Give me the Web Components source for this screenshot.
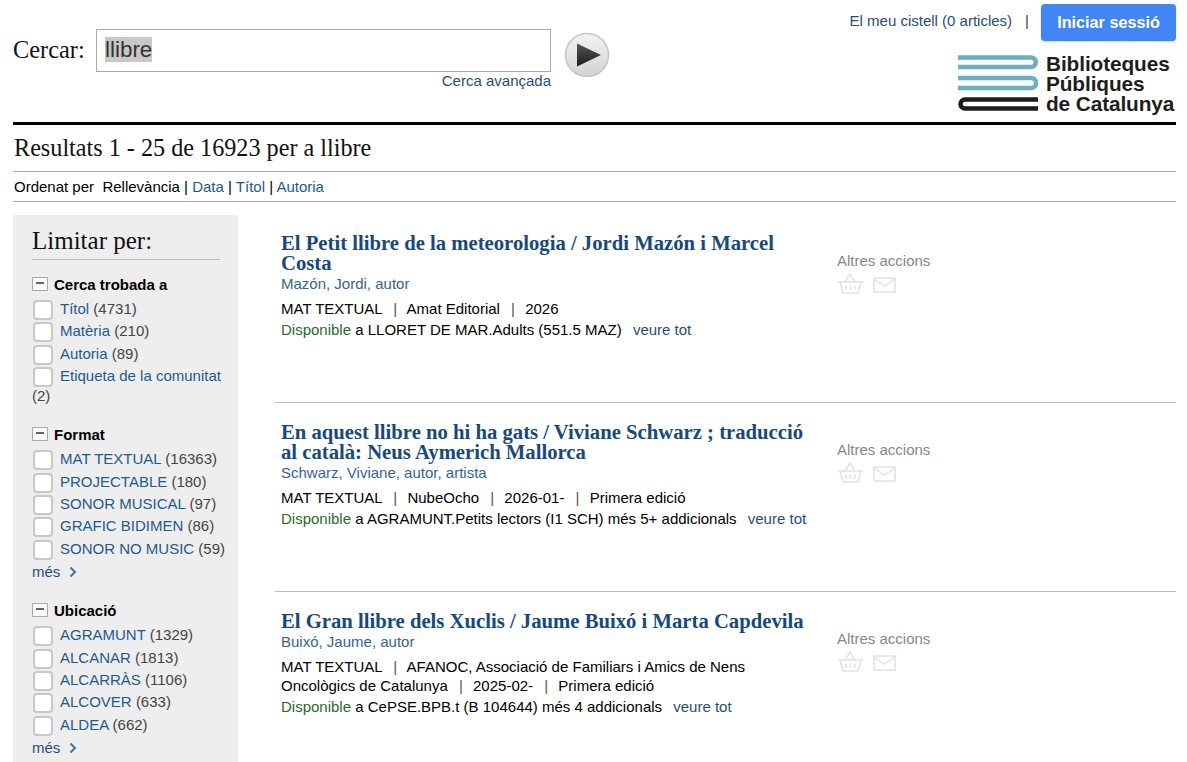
<!DOCTYPE html>
<html lang="ca"><head><meta charset="utf-8"><title>Cercar</title>
<style>
html,body{margin:0;height:762px;overflow:hidden;background:#fff}
body{font:15px/1.2 "Liberation Sans",Arial,sans-serif;color:#000}
</style></head><body>
<bpc-page></bpc-page>
<template id="hdr"><style>
:host{display:flex;justify-content:space-between;height:122px;border-bottom:3px solid #000}
.l{display:flex;align-items:flex-start;padding-top:29px}
.lab{font:24.4px/42px "Liberation Serif",serif;width:83px;color:#111}
.col{display:flex;flex-direction:column;align-items:flex-end}
.box{box-sizing:border-box;width:455px;height:43px;border:1px solid #aaa;padding:7px 8px;font:22.4px/25px "Liberation Sans",sans-serif;color:#333}
.box span{background:#c8c8c8}
a{color:#1f4e79;text-decoration:none}
.adv{line-height:17px}
.go{margin:3px 0 0 13px;display:block}
.r{display:flex;flex-direction:column;align-items:flex-end}
.top{display:flex;align-items:center;padding-top:4px;height:37px}
.top a,.sep{position:relative;top:-2px}
.sep{margin:0 12px 0 13px;color:#444}
.btn{box-sizing:border-box;width:135px;height:37px;background:#4285f4;color:#fff;border-radius:4px;font:700 16.2px/37px "Liberation Sans",sans-serif;text-align:center;box-shadow:0 1px 2px #0003}
.logo{display:flex;margin-top:13px;gap:8px;align-items:flex-start}
.logo svg{display:block}
.name{font:700 20.8px/20px "Liberation Sans",sans-serif;color:#1d1d1b;width:130px;letter-spacing:-.1px;white-space:nowrap}
</style>
<div class="l"><div class="lab">Cercar:</div><div class="col"><div class="box"><span>llibre</span></div><a class="adv" href="#">Cerca avançada</a></div>
<svg class="go" width="46" height="46" viewBox="0 0 46 46"><defs><linearGradient id="g" x1="0" y1="0" x2="0" y2="1"><stop offset="0" stop-color="#f4f4f4"/><stop offset="1" stop-color="#d2d2d2"/></linearGradient><linearGradient id="t" x1="0" y1="0" x2="0" y2="1"><stop offset="0" stop-color="#555"/><stop offset="1" stop-color="#1e1e1e"/></linearGradient></defs><circle cx="23" cy="23" r="21.500" fill="url(#g)" stroke="#c4c4c4" stroke-width="1.500"/><path d="M13 11.500 37 23 13 34.500Z" fill="url(#t)"/></svg></div>
<div class="r"><div class="top"><a href="#">El meu cistell (0 articles)</a><span class="sep">|</span><div class="btn">Iniciar sessió</div></div>
<div class="logo"><svg width="80" height="58" viewBox="0 0 80 58" fill="none" stroke-width="4.500"><path d="M0 3.500H73a4.750 4.750 0 0 1 0 9.500H0" stroke="#69b1be"/><path d="M0 24H73a5 5 0 0 1 0 10H0" stroke="#69b1be"/><path d="M80 45.500H7a4.500 4.500 0 0 0 0 9H80" stroke="#1d1d1b"/></svg><div class="name">Biblioteques<br>Públiques<br>de Catalunya</div></div></div>
</template>
<template id="bar"><style>
:host{display:block}
h1{box-sizing:border-box;height:47px;margin:0;font:400 24.2px/46px "Liberation Serif",serif;color:#111;border-bottom:1px solid #aaa;padding-left:1px}
div{height:29px;line-height:29px;border-bottom:1px solid #aaa;padding-left:1px;white-space:pre}
a{color:#1f5a8c;text-decoration:none}
</style><h1>Resultats 1 - 25 de 16923 per a llibre</h1>
<div>Ordenat per  Rellevància | <a href="#">Data</a> | <a href="#">Títol</a> | <a href="#">Autoria</a></div></template>
<template id="side"><style>
:host{display:block;box-sizing:border-box;width:225px;height:547px;background:#eee;padding:0 10px 0 19px;overflow:hidden;flex:none;margin-top:1px}
h2{margin:0 8px -4px 0;font:400 25px/52px "Liberation Serif",serif;color:#111;border-bottom:1px solid #bbb;height:44px}
</style><h2>Limitar per:</h2><slot></slot></template>
<template id="facet"><style>
:host{display:block;margin-top:18px}
.t{display:flex;align-items:center;font-weight:700;height:22px;gap:6px;margin-bottom:3px}
.m{box-sizing:border-box;width:16px;height:14px;border:1px solid #aaa;background:#fafafa;position:relative;margin-top:-3px}
.m::after{content:"";position:absolute;left:3px;right:3px;top:4px;height:2px;background:#666}
.more{display:flex;gap:9px;align-items:center;color:#1f4e79;height:21px;line-height:21px}
</style><div class="t"><span class="m"></span><span class="h"></span></div><slot></slot><div class="more" part="more"></div></template>
<template id="item"><style>
:host{display:block;line-height:20px;margin-bottom:2.4px;color:#444}
i{display:inline-block;box-sizing:border-box;width:20px;height:20px;border:2px solid #c8c8c8;border-radius:4px;background:#fff;vertical-align:middle;margin:-3px 7px -3px 1px}
a{color:#1f5a8c;text-decoration:none}
</style><i></i><a href="#"><slot></slot></a> <span class="n"></span></template>
<template id="rec"><style>
:host{display:flex;box-sizing:border-box;height:189px;border-bottom:1px solid #bbb;padding:19px 0 0 6px}
.m{width:534px;flex:none}
h3{margin:0;font:700 20.7px/20px "Liberation Serif",serif;color:#17497a}
.a{line-height:22px;color:#36648f;margin-bottom:3.5px}
.d{line-height:19px;width:500px;margin-bottom:1px}
.d span{color:#555;margin:0 6px 0 7px}
.av{line-height:21px}
.av b{font-weight:400;color:#2a6a2a}
.av a{color:#1f4e79;text-decoration:none;margin-left:7px}
.x{margin-left:22px;padding-top:19px;color:#888;line-height:18px}
svg{display:block;margin-top:3px}
</style><div class="m"><h3></h3><div class="a"></div><div class="d"></div><div class="av"><b>Disponible</b> <span class="w"></span> <a href="#">veure tot</a></div></div>
<div class="x">Altres accions<svg width="62" height="22" viewBox="0 0 62 22" fill="none" stroke="#e2e2e2" stroke-width="1.500"><path d="M1 9H26M3 9 6 20H21L24 9M8 9 13 1 18 9M8.500 12.500 9.500 17M13.500 12.500V17M18.500 12.500 17.500 17"/><path d="M37 5H58V19H37ZM37 6 47.500 13 58 6"/></svg></div></template>
<script>
const T=id=>document.getElementById(id).content.cloneNode(true);
class B extends HTMLElement{constructor(){super();this.attachShadow({mode:'open'}).append(T(this.constructor.t))}}
class Hdr extends B{static t='hdr'} customElements.define('bpc-header',Hdr);
class Bar extends B{static t='bar'} customElements.define('bpc-bar',Bar);
class Side extends B{static t='side'} customElements.define('bpc-side',Side);
class Facet extends B{static t='facet';connectedCallback(){const s=this.shadowRoot;s.querySelector('.h').textContent=this.getAttribute('title');
 const m=s.querySelector('.more');if(this.hasAttribute('more')){m.innerHTML='més <svg width="8" height="12" viewBox="0 0 8 12" fill="none" stroke="#47749c" stroke-width="2"><path d="M1.500 1.500 6 6 1.500 10.500"/></svg>'}else m.remove()}}
customElements.define('bpc-facet',Facet);
class Item extends B{static t='item';connectedCallback(){this.shadowRoot.querySelector('.n').textContent='('+this.getAttribute('n')+')'}}
customElements.define('bpc-item',Item);
class Rec extends B{static t='rec';connectedCallback(){const s=this.shadowRoot,g=k=>this.getAttribute(k);
 s.querySelector('h3').textContent=g('t');s.querySelector('.a').textContent=g('a');
 const d=s.querySelector('.d');g('d').split('|').forEach((p,i)=>{if(i){const e=document.createElement('span');e.textContent='|';d.append(' ',e,' ')}p.split('^').forEach(x=>d.append(x))});
 s.querySelector('.w').textContent=g('w')}}
customElements.define('bpc-record',Rec);
class Page extends HTMLElement{constructor(){super();const f=(t,more,it)=>`<bpc-facet title="${t}" ${more?'more':''}>${it.map(([a,b])=>`<bpc-item n="${b}">${a}</bpc-item>`).join('')}</bpc-facet>`;
 this.attachShadow({mode:'open'}).innerHTML=`<style>:host{display:block;box-sizing:border-box;padding:0 11px 0 13px}.c{display:flex;gap:37px;margin-top:12px}main{flex:1;min-width:0}</style>
 <bpc-header></bpc-header><bpc-bar></bpc-bar><div class="c"><bpc-side>
 ${f('Cerca trobada a',0,[['Títol',4731],['Matèria',210],['Autoria',89],['Etiqueta de la comunitat',2]])}
 ${f('Format',1,[['MAT TEXTUAL',16363],['PROJECTABLE',180],['SONOR MUSICAL',97],['GRAFIC BIDIMEN',86],['SONOR NO MUSIC',59]])}
 ${f('Ubicació',1,[['AGRAMUNT',1329],['ALCANAR',1813],['ALCARRÀS',1106],['ALCOVER',633],['ALDEA',662]])}
 </bpc-side><main>
 <bpc-record t="El Petit llibre de la meteorologia / Jordi Mazón i Marcel Costa" a="Mazón, Jordi, autor" d="MAT TEXTUAL|Amat Editorial|2026" w="a LLORET DE MAR.Adults (551.5 MAZ)"></bpc-record>
 <bpc-record t="En aquest llibre no hi ha gats / Viviane Schwarz ; traducció al català: Neus Aymerich Mallorca" a="Schwarz, Viviane, autor, artista" d="MAT TEXTUAL|NubeOcho|2026-01-|Primera edició" w="a AGRAMUNT.Petits lectors (I1 SCH) més 5+ addicionals"></bpc-record>
 <bpc-record t="El Gran llibre dels Xuclis / Jaume Buixó i Marta Capdevila" a="Buixó, Jaume, autor" d="MAT TEXTUAL|AFANOC, Associació de Familiars i Amics de Nens ^Oncològics de Catalunya|2025-02-|Primera edició" w="a CePSE.BPB.t (B 104644) més 4 addicionals"></bpc-record>
 </main></div>`}}
customElements.define('bpc-page',Page);
</script></body></html>
